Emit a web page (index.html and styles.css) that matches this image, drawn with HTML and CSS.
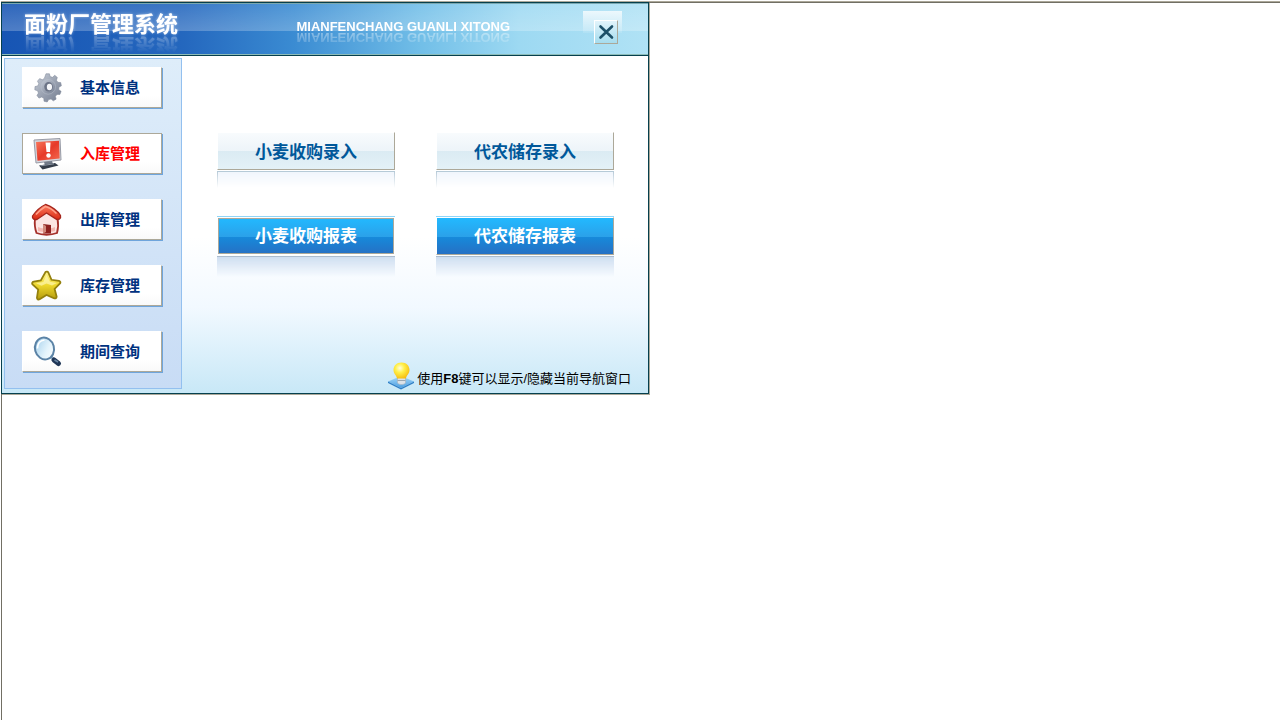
FILE: index.html
```html
<!DOCTYPE html>
<html lang="zh-CN">
<head>
  <meta charset="UTF-8">
  <meta name="viewport" content="width=device-width, initial-scale=1.0">
  <title>面粉厂管理系统</title>
  <link rel="stylesheet" href="styles.css">
</head>
<body>
  <div class="desktop">
    <div class="window">
      <header class="banner">
        <h1>面粉厂管理系统</h1>
        <p class="subtitle">MIANFENCHANG GUANLI XITONG</p>
        <div class="close-box">
          <button class="close" type="button" aria-label="关闭">
            <svg width="18" height="16" viewBox="0 0 18 16"><path d="M3.5 2.5L15 13.5M15 2.5L3.500 13.5" stroke="#1d5068" stroke-width="2.6" stroke-linecap="round"/></svg>
          </button>
        </div>
      </header>

      <div class="content">
        <nav class="sidebar">
          <button class="nav-item" type="button">
            <svg width="32" height="34" viewBox="-1 0 34 34">
              <defs>
                <linearGradient id="steel" x1="0" y1="0" x2="1" y2="1"><stop offset="0" stop-color="#c9cfd9"/><stop offset=".5" stop-color="#9ba3b2"/><stop offset="1" stop-color="#747d90"/></linearGradient>
              </defs>
              <g transform="translate(2.500 .5) scale(.92)" fill="url(#steel)" stroke="#7b8496" stroke-width=".6">
                <path d="M13.500 1.500h4l.8 3.200 2.700.9 2.600-2.300 3 2.400-1 3.300 1.600 2.400 3.300.2.800 3.800-2.900 1.600-.1 2.900 2.700 1.900-1.400 3.600-3.300-.1-1.900 2.200.8 3.300-3.300 2-2.500-2.100-2.800.6-1.700 2.800-3.700-.9-.2-3.300-2.500-1.500-3.100 1.200-2.300-3 1.700-2.800-1-2.700-3.200-1 .2-3.800 3.200-.8 1.200-2.600-1.500-2.900 2.500-2.900 3 1.300 2.400-1.500z"/>
                <circle cx="16" cy="16.500" r="8.500" stroke="#b9c0cc"/>
                <ellipse cx="16.500" cy="16.500" rx="5" ry="5.500" fill="#6c7486" stroke="none"/>
                <ellipse cx="17.500" cy="16.800" rx="3" ry="3.800" fill="#f6f7f9" stroke="none"/>
              </g>
            </svg>
            <span>基本信息</span>
          </button>
          <button class="nav-item active" type="button">
            <svg width="32" height="34" viewBox="0 0 32 34">
              <defs>
                <linearGradient id="screen" x1="0" y1="0" x2="1" y2="1"><stop offset="0" stop-color="#f9785c"/><stop offset=".5" stop-color="#e63a29"/><stop offset="1" stop-color="#f46a50"/></linearGradient>
              </defs>
              <path d="M3 3l26-1.500 1 21.500-25 3z" fill="#d4d6dc" stroke="#989ba6"/>
              <path d="M5 5l23-1.300.7 17.800L6.500 23.800z" fill="url(#screen)"/>
              <path d="M14.500 5.500h5l-.5 9.500h-3.500z" fill="#fff"/>
              <circle cx="17.500" cy="18.500" r="2.200" fill="#fff"/>
              <path d="M13 25l8-1 1 3-8 1.500z" fill="#727a88"/>
              <path d="M8 28.500l16-2.500 3.500 2.500-16 4z" fill="#343c49"/>
              <path d="M10 28.800l13-2" stroke="#8c95a3"/>
            </svg>
            <span>入库管理</span>
          </button>
          <button class="nav-item" type="button">
            <svg width="32" height="34" viewBox="0 0 32 34">
              <defs>
                <linearGradient id="roof" x1="0" y1="0" x2="0" y2="1"><stop offset="0" stop-color="#ff8062"/><stop offset="1" stop-color="#d92812"/></linearGradient>
              </defs>
              <path d="M4 15.500c4-3 8-6 11-8 4 3 8 5 11.500 8 1 5 .5 11-.5 14.500-6 2.300-15 2.300-20.500 0C4 26 3.500 20 4 15.500z" fill="#fce5e2" stroke="#a5302a" stroke-width="1.800"/>
              <path d="M7 28c5 1.500 12 1.500 17 0v-4c-5 2-12 2-17 0z" fill="#f4b8b1"/>
              <path d="M12 30.500V21l8 1v8.500z" fill="#8d201e"/>
              <path d="M12 30.500V21l3 2v6z" fill="#d08a7c"/>
              <path d="M1.500 13C5 8 10 3.500 14.500 1.500 20 3 27 8 29.500 12.500c.7 3-1.500 4.500-4 3.800L15.500 10 6 16.500c-3 .5-5-1-4.500-3.500z" fill="url(#roof)" stroke="#a5251c" stroke-width="1.300"/>
              <path d="M5 11.500c3-3.500 6-6 9.500-8 4 1 8 4 11 7" fill="none" stroke="#ffa18a" stroke-width="1.500"/>
            </svg>
            <span>出库管理</span>
          </button>
          <button class="nav-item" type="button">
            <svg width="32" height="34" viewBox="0 0 32 34">
              <defs>
                <linearGradient id="gold" x1="0" y1="0" x2="0" y2="1"><stop offset="0" stop-color="#fff58f"/><stop offset=".5" stop-color="#ecd62c"/><stop offset="1" stop-color="#b49b0d"/></linearGradient>
              </defs>
              <path d="M14.500 3c1-.8 2.500-.3 3 .8l3 7 7.500 1c1.500.4 1.800 1.800.8 2.800l-5.200 5.300 2 7.500c.2 1.600-1.200 2.500-2.700 1.800L15.500 26l-6.800 4.200c-1.600.8-3-.3-2.700-1.900l1.200-7.600-5.400-5c-1.200-1.200-.6-2.700 1-3l7-1.200z" fill="url(#gold)" stroke="#94800d" stroke-width="1.800"/>
              <path d="M15.500 6l-3.200 7-7.300 1.300 5.500 2.500 5-2.300 5.500 2 5-2.500-7-1.200z" fill="#fff9b8" opacity=".65"/>
            </svg>
            <span>库存管理</span>
          </button>
          <button class="nav-item" type="button">
            <svg width="32" height="34" viewBox="0 0 32 34">
              <defs>
                <linearGradient id="lens" x1="0" y1="0" x2="1" y2="1"><stop offset="0" stop-color="#9fcdeb"/><stop offset=".6" stop-color="#e4f4fc"/><stop offset="1" stop-color="#fff"/></linearGradient>
              </defs>
              <path d="M20 22l3 3" stroke="#9eb8cc" stroke-width="3"/>
              <path d="M23 25l4.500 3.500" stroke="#1f3656" stroke-width="5" stroke-linecap="round"/>
              <path d="M23.500 25l3.500 2" stroke="#6683a1" stroke-width="1.500"/>
              <ellipse cx="13.500" cy="13.500" rx="9.500" ry="11" transform="rotate(-15 13.500 13.500)" fill="url(#lens)" stroke="#5b83a6" stroke-width="2"/>
              <path d="M6.500 13.500c0-5 3-8 7-8.500" fill="none" stroke="#fff" stroke-width="1.500"/>
            </svg>
            <span>期间查询</span>
          </button>
        </nav>

        <main class="main">
          <div class="actions">
            <button class="action" type="button">小麦收购录入</button>
            <button class="action" type="button">代农储存录入</button>
            <button class="action report focused" type="button">小麦收购报表</button>
            <button class="action report" type="button">代农储存报表</button>
          </div>
          <p class="tip">
            <svg width="28" height="30" viewBox="0 0 28 30">
              <defs>
                <radialGradient id="bulb" cx=".4" cy=".35" r=".7"><stop offset="0" stop-color="#fffde0"/><stop offset=".4" stop-color="#fff04a"/><stop offset="1" stop-color="#f6b90c"/></radialGradient>
                <linearGradient id="tile" x1="0" y1="0" x2="0" y2="1"><stop offset="0" stop-color="#a8dbfb"/><stop offset="1" stop-color="#4a9de0"/></linearGradient>
              </defs>
              <path d="M1 19.500L14 14l13 5.500L14 26z" fill="url(#tile)"/>
              <path d="M1 19.500L14 26l13-6.500V21l-13 6.500L1 21z" fill="#2f7fc6"/>
              <path d="M10.500 14h8v7c-2 2-6 2-8 0z" fill="#dce2e8" stroke="#a8b2bc" stroke-width=".6"/>
              <path d="M10.500 18.500h8" stroke="#9ba6b0"/>
              <path d="M14.500.5c5 0 8 3.500 8 7.500s-3 5-3.500 8.500h-9C9.500 13 6.500 12 6.500 8s3-7.500 8-7.500z" fill="url(#bulb)"/>
            </svg>
            <span>使用<b>F8</b>键可以显示/隐藏当前导航窗口</span>
          </p>
        </main>
      </div>
    </div>
  </div>
</body>
</html>
```

FILE: styles.css
```css
* {
  box-sizing: border-box;
}
body {
  margin: 0;
  padding: 1px 0 0 1px;
  background-color: #fff;
  font-family: "Liberation Sans", "Noto Sans CJK SC", sans-serif;
}
h1, p {
  margin: 0;
}
button {
  font-family: inherit;
  cursor: pointer;
}
.desktop {
  min-height: calc(100vh - 1px);
  border-top: 1px solid #aca899;
  background: linear-gradient(#716f64, #716f64) left / 1px 100% no-repeat,
    linear-gradient(#716f64, #716f64) top / 100% 1px no-repeat;
}
.window {
  width: 100%;
  max-width: 648px;
  border: 1px solid #06404e;
  background: linear-gradient(#fff 60%, #f2f9ff 78%, #c8e8f7);
  box-shadow: 1px 1px 0 #aca899;
}

/* top banner */
.banner {
  display: flex;
  align-items: flex-start;
  height: 53px;
  padding: 0 26px 0 22px;
  border-top: 1px solid #7aa8b0;
  border-bottom: 1px solid #06404e;
  box-shadow: inset 0 -1px 0 #8dbcb8;
  background:
    linear-gradient(rgba(255, 255, 255, 0.1), rgba(255, 255, 255, 0.24)) top / 100% 27px no-repeat,
    linear-gradient(90deg, #1755b4 0%, #2467be 28%, #3a8bd2 45%, #72bfe8 65%, #9dd9f2 80%, #b0e2f5 100%);
  color: #fff;
}
.banner h1 {
  flex: 1;
  font-size: 22px;
  line-height: 30px;
  padding-top: 6px;
  text-shadow: 0 0 3px rgba(255, 255, 255, 0.5);
  -webkit-box-reflect: below -9px linear-gradient(transparent 40%, rgba(255, 255, 255, 0.4));
}
.subtitle {
  padding-top: 14px;
  margin-right: 73px;
  font-size: 13px;
  font-weight: bold;
  line-height: 18px;
  -webkit-box-reflect: below -8px linear-gradient(transparent 30%, rgba(255, 255, 255, 0.5));
}
.close-box {
  margin-top: 7px;
  padding: 9px 4px 0 11px;
  background: linear-gradient(rgba(255, 255, 255, 0.75), rgba(255, 255, 255, 0.1)) top / 100% 22px no-repeat;
}
.close {
  display: flex;
  align-items: center;
  justify-content: center;
  width: 24px;
  height: 24px;
  padding: 0;
  border: 1px solid #fff;
  border-right-color: #aca899;
  border-bottom-color: #aca899;
  background: linear-gradient(#e2f4fb, #a5dcee);
}

.content {
  display: flex;
  padding: 2px 0 1px 2px;
}

/* left menu */
.sidebar {
  display: flex;
  flex-direction: column;
  gap: 25px;
  width: 178px;
  margin-bottom: 3px;
  padding: 8px 19px 16px 17px;
  border: 1px solid #93c0ef;
  background: linear-gradient(#deedfa, #c8dcf5);
}
.nav-item {
  display: flex;
  align-items: center;
  gap: 17px;
  height: 41px;
  padding: 0 8px;
  border: 1px solid #fff;
  border-right-color: #aca899;
  border-bottom-color: #aca899;
  background: linear-gradient(#fff 70%, #f9f9f9);
  box-shadow: 1px 1px 0 #6fa5dc;
  color: #00327f;
  font-size: 15px;
  font-weight: bold;
}
.nav-item.active {
  border-top-color: #aca899;
  border-left-color: #aca899;
  color: #f00;
}
.nav-item span {
  padding-bottom: 2px;
}

/* function buttons */
.main {
  flex: 1;
  display: flex;
  flex-direction: column;
  justify-content: space-between;
  padding: 74px 17px 0 35px;
}
.actions {
  display: grid;
  grid-template-columns: 178px 178px;
  gap: 47px 41px;
}
.action {
  position: relative;
  height: 38px;
  padding: 0 0 1px;
  border: 1px solid #fff;
  border-right-color: #aca899;
  border-bottom-color: #aca899;
  background: linear-gradient(#f8fbfd, #edf4f9 50%, #dbebf3 50%, #e4f1f7);
  color: #00589a;
  font-size: 17px;
  font-weight: bold;
}
/* fading reflection under each button */
.action::after {
  content: "";
  position: absolute;
  top: 38px;
  left: -1px;
  right: -1px;
  height: 16px;
  border: solid #b4c8d6;
  border-width: 1px 1px 0;
  background: #f0f5fc;
  -webkit-mask-image: linear-gradient(#000, transparent);
}
.report {
  padding-bottom: 4px;
  border-top-color: #fff;
  box-shadow: 0 -1px 0 #8fd6fa;
  background: linear-gradient(#22b9ff, #2ba1e9 52%, #168adb 52%, #2670c4);
  color: #fff;
}
.report::after {
  height: 20px;
  border-color: #a9b9cc;
  border-width: 1px 0 0;
  background: #cbdcf0;
}
.focused {
  border-color: #fff;
  box-shadow: inset 0 0 0 1px #aca899, 0 -1px 0 #8fd6fa;
}
.tip {
  display: flex;
  align-items: center;
  justify-content: flex-end;
  gap: 2px;
  color: #000;
  font-size: 13px;
}
```
